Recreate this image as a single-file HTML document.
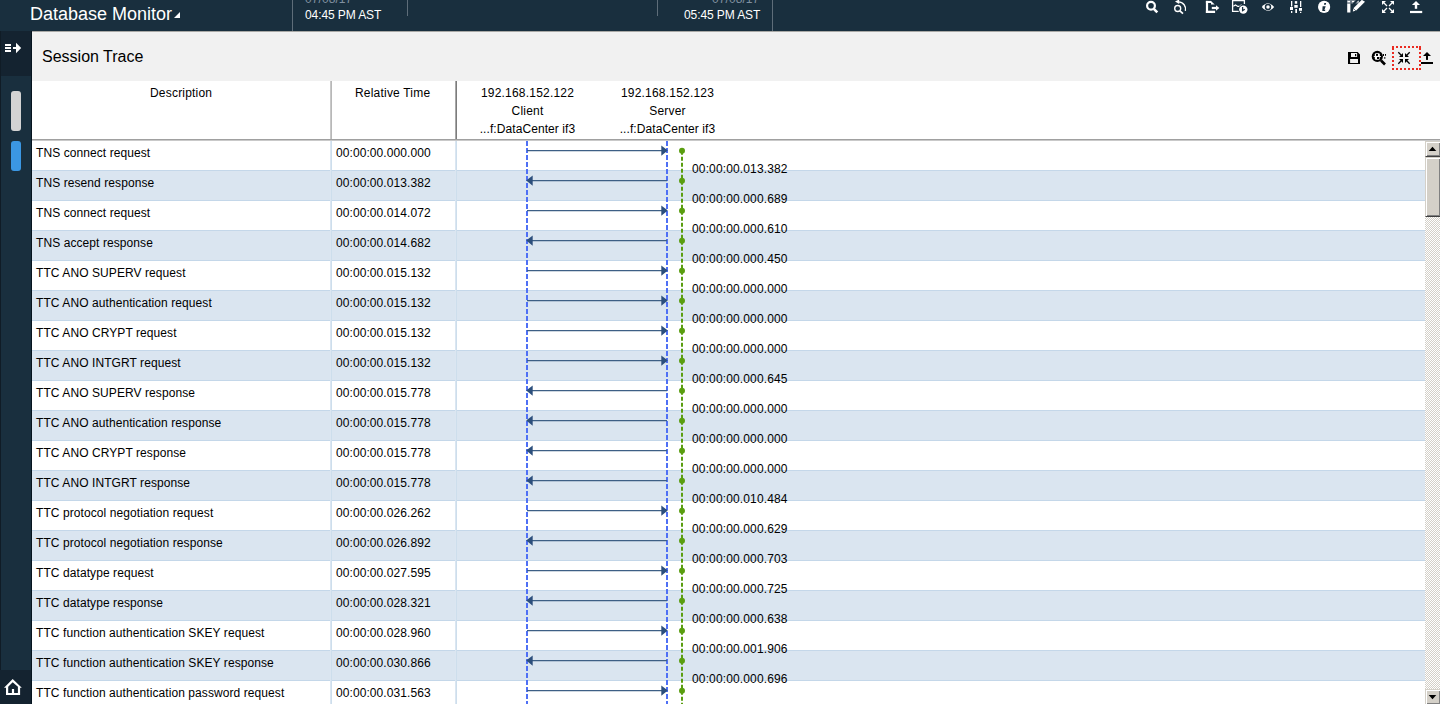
<!DOCTYPE html><html><head><meta charset="utf-8"><style>
*{margin:0;padding:0;box-sizing:border-box}
html,body{width:1440px;height:704px;overflow:hidden;background:#fff;font-family:"Liberation Sans",sans-serif;color:#000}
.a{position:absolute;white-space:nowrap}
#top{position:absolute;left:0;top:0;width:1440px;height:31px;background:#192f3e}
#side{position:absolute;left:0;top:31px;width:32px;height:673px;background:#192f3e}
#panel{position:absolute;left:32px;top:31px;width:1408px;height:673px;background:#fff}
.t12{font-size:12px;line-height:14px;letter-spacing:0.08px}
.hd{letter-spacing:0.2px}
.lb{letter-spacing:0.14px}
.dt{letter-spacing:-0.1px}
.row{position:absolute;left:32px;width:1393px;height:30px}
.blue{height:31px;background:#dae5f0;border-top:1px solid #c4d7e9;border-bottom:1px solid #c4d7e9}
</style></head><body>
<div id="top">
<div class="a" style="left:30px;top:3px;font-size:18px;line-height:22px;color:#fff">Database Monitor</div>
<svg class="a" style="left:173px;top:11px" width="8" height="8"><path d="M1 7 L7 7 L7 1 Z" fill="#fff"/></svg>
<div class="a" style="left:292px;top:0;width:1px;height:31px;background:#5e6d79"></div>
<div class="a" style="left:407px;top:0;width:1px;height:16px;background:#5e6d79"></div>
<div class="a" style="left:657px;top:0;width:1px;height:16px;background:#5e6d79"></div>
<div class="a" style="left:772px;top:0;width:1px;height:31px;background:#5e6d79"></div>
<div class="a t12" style="left:305px;top:-8px;color:#8090a0">07/08/17</div>
<div class="a t12 dt" style="left:305px;top:8px;color:#fff">04:45 PM AST</div>
<div class="a t12" style="left:712px;top:-8px;color:#8090a0">07/08/17</div>
<div class="a t12 dt" style="left:684px;top:8px;color:#fff">05:45 PM AST</div>
</div>
<div id="side">
<div class="a" style="left:0;top:0;width:31px;height:45px;background:#142330"></div>
<div class="a" style="left:31px;top:0;width:1px;height:673px;background:#06141f"></div>
<div class="a" style="left:0;top:0;width:1px;height:673px;background:#101c26"></div>
<div class="a" style="left:11px;top:60px;width:10px;height:40px;border-radius:3px;background:#d3d3d3"></div>
<div class="a" style="left:11px;top:110px;width:10px;height:30px;border-radius:3px;background:#3b97e3"></div>
<div class="a" style="left:0;top:639px;width:31px;height:34px;background:#142330"></div>
</div>
<div id="panel">
<div class="a" style="left:0;top:0;width:1408px;height:50px;background:#f1f1f1"></div>
<div class="a" style="left:0;top:0;width:1408px;height:1px;background:#a9a9a6"></div>
<div class="a" style="left:10px;top:17px;font-size:16px;line-height:18px;color:#000">Session Trace</div>
</div>
<div class="a" style="left:330px;top:81px;width:1px;height:59px;background:#c8c8c8"></div>
<div class="a" style="left:331px;top:81px;width:1px;height:59px;background:#b8b8b8"></div>
<div class="a" style="left:455px;top:81px;width:1px;height:59px;background:#a8a8a8"></div>
<div class="a" style="left:456px;top:81px;width:1px;height:59px;background:#7c7c7c"></div>
<div class="a" style="left:32px;top:139px;width:1408px;height:1px;background:#a0a0a0"></div>
<div class="a" style="left:32px;top:140px;width:1408px;height:1px;background:#c9c9c9"></div>
<div class="a t12 hd" style="left:150px;top:86px">Description</div>
<div class="a t12 hd" style="left:355px;top:86px">Relative Time</div>
<div class="a t12 hd" style="left:467.5px;width:120px;text-align:center;top:86px">192.168.152.122</div>
<div class="a t12 hd" style="left:467.5px;width:120px;text-align:center;top:104px">Client</div>
<div class="a t12 " style="left:467.5px;width:120px;text-align:center;top:122px">...f:DataCenter if3</div>
<div class="a t12 hd" style="left:607.5px;width:120px;text-align:center;top:86px">192.168.152.123</div>
<div class="a t12 hd" style="left:607.5px;width:120px;text-align:center;top:104px">Server</div>
<div class="a t12 " style="left:607.5px;width:120px;text-align:center;top:122px">...f:DataCenter if3</div>
<div class="a row" style="top:140px"></div>
<div class="a t12" style="left:36px;top:146px">TNS connect request</div>
<div class="a t12" style="left:336px;top:146px">00:00:00.000.000</div>
<div class="a row blue" style="top:170px"></div>
<div class="a t12" style="left:36px;top:176px">TNS resend response</div>
<div class="a t12" style="left:336px;top:176px">00:00:00.013.382</div>
<div class="a row" style="top:200px"></div>
<div class="a t12" style="left:36px;top:206px">TNS connect request</div>
<div class="a t12" style="left:336px;top:206px">00:00:00.014.072</div>
<div class="a row blue" style="top:230px"></div>
<div class="a t12" style="left:36px;top:236px">TNS accept response</div>
<div class="a t12" style="left:336px;top:236px">00:00:00.014.682</div>
<div class="a row" style="top:260px"></div>
<div class="a t12" style="left:36px;top:266px">TTC ANO SUPERV request</div>
<div class="a t12" style="left:336px;top:266px">00:00:00.015.132</div>
<div class="a row blue" style="top:290px"></div>
<div class="a t12" style="left:36px;top:296px">TTC ANO authentication request</div>
<div class="a t12" style="left:336px;top:296px">00:00:00.015.132</div>
<div class="a row" style="top:320px"></div>
<div class="a t12" style="left:36px;top:326px">TTC ANO CRYPT request</div>
<div class="a t12" style="left:336px;top:326px">00:00:00.015.132</div>
<div class="a row blue" style="top:350px"></div>
<div class="a t12" style="left:36px;top:356px">TTC ANO INTGRT request</div>
<div class="a t12" style="left:336px;top:356px">00:00:00.015.132</div>
<div class="a row" style="top:380px"></div>
<div class="a t12" style="left:36px;top:386px">TTC ANO SUPERV response</div>
<div class="a t12" style="left:336px;top:386px">00:00:00.015.778</div>
<div class="a row blue" style="top:410px"></div>
<div class="a t12" style="left:36px;top:416px">TTC ANO authentication response</div>
<div class="a t12" style="left:336px;top:416px">00:00:00.015.778</div>
<div class="a row" style="top:440px"></div>
<div class="a t12" style="left:36px;top:446px">TTC ANO CRYPT response</div>
<div class="a t12" style="left:336px;top:446px">00:00:00.015.778</div>
<div class="a row blue" style="top:470px"></div>
<div class="a t12" style="left:36px;top:476px">TTC ANO INTGRT response</div>
<div class="a t12" style="left:336px;top:476px">00:00:00.015.778</div>
<div class="a row" style="top:500px"></div>
<div class="a t12" style="left:36px;top:506px">TTC protocol negotiation request</div>
<div class="a t12" style="left:336px;top:506px">00:00:00.026.262</div>
<div class="a row blue" style="top:530px"></div>
<div class="a t12" style="left:36px;top:536px">TTC protocol negotiation response</div>
<div class="a t12" style="left:336px;top:536px">00:00:00.026.892</div>
<div class="a row" style="top:560px"></div>
<div class="a t12" style="left:36px;top:566px">TTC datatype request</div>
<div class="a t12" style="left:336px;top:566px">00:00:00.027.595</div>
<div class="a row blue" style="top:590px"></div>
<div class="a t12" style="left:36px;top:596px">TTC datatype response</div>
<div class="a t12" style="left:336px;top:596px">00:00:00.028.321</div>
<div class="a row" style="top:620px"></div>
<div class="a t12" style="left:36px;top:626px">TTC function authentication SKEY request</div>
<div class="a t12" style="left:336px;top:626px">00:00:00.028.960</div>
<div class="a row blue" style="top:650px"></div>
<div class="a t12" style="left:36px;top:656px">TTC function authentication SKEY response</div>
<div class="a t12" style="left:336px;top:656px">00:00:00.030.866</div>
<div class="a row" style="top:680px"></div>
<div class="a t12" style="left:36px;top:686px">TTC function authentication password request</div>
<div class="a t12" style="left:336px;top:686px">00:00:00.031.563</div>
<div class="a" style="left:330px;top:141px;width:1px;height:563px;background:#dbe6f1"></div>
<div class="a" style="left:331px;top:141px;width:1px;height:563px;background:#cddeec"></div>
<div class="a" style="left:455px;top:141px;width:1px;height:563px;background:#dbe6f1"></div>
<div class="a" style="left:456px;top:141px;width:1px;height:563px;background:#cddeec"></div>
<svg class="a" style="left:0;top:0" width="1440" height="704">
<line x1="527" y1="141" x2="527" y2="704" stroke="#4f70f5" stroke-width="2" stroke-dasharray="5 2"/>
<line x1="667" y1="141" x2="667" y2="704" stroke="#4f70f5" stroke-width="2" stroke-dasharray="5 2"/>
<line x1="682" y1="150.8" x2="682" y2="704" stroke="#5a9e10" stroke-width="2" stroke-dasharray="4 2"/>
<line x1="527" y1="150.6" x2="662" y2="150.6" stroke="#3d5f85" stroke-width="1.3"/>
<path d="M661.3 145.4 L667.8 150.6 L661.3 155.79999999999998 Z" fill="#2c4f7c"/>
<circle cx="682" cy="150.8" r="3" fill="#5a9e10"/>
<line x1="532" y1="180.6" x2="667" y2="180.6" stroke="#3d5f85" stroke-width="1.3"/>
<path d="M532.7 175.4 L526.2 180.6 L532.7 185.79999999999998 Z" fill="#2c4f7c"/>
<circle cx="682" cy="180.8" r="3" fill="#5a9e10"/>
<line x1="527" y1="210.6" x2="662" y2="210.6" stroke="#3d5f85" stroke-width="1.3"/>
<path d="M661.3 205.4 L667.8 210.6 L661.3 215.79999999999998 Z" fill="#2c4f7c"/>
<circle cx="682" cy="210.8" r="3" fill="#5a9e10"/>
<line x1="532" y1="240.6" x2="667" y2="240.6" stroke="#3d5f85" stroke-width="1.3"/>
<path d="M532.7 235.4 L526.2 240.6 L532.7 245.79999999999998 Z" fill="#2c4f7c"/>
<circle cx="682" cy="240.8" r="3" fill="#5a9e10"/>
<line x1="527" y1="270.6" x2="662" y2="270.6" stroke="#3d5f85" stroke-width="1.3"/>
<path d="M661.3 265.40000000000003 L667.8 270.6 L661.3 275.8 Z" fill="#2c4f7c"/>
<circle cx="682" cy="270.8" r="3" fill="#5a9e10"/>
<line x1="527" y1="300.6" x2="662" y2="300.6" stroke="#3d5f85" stroke-width="1.3"/>
<path d="M661.3 295.40000000000003 L667.8 300.6 L661.3 305.8 Z" fill="#2c4f7c"/>
<circle cx="682" cy="300.8" r="3" fill="#5a9e10"/>
<line x1="527" y1="330.6" x2="662" y2="330.6" stroke="#3d5f85" stroke-width="1.3"/>
<path d="M661.3 325.40000000000003 L667.8 330.6 L661.3 335.8 Z" fill="#2c4f7c"/>
<circle cx="682" cy="330.8" r="3" fill="#5a9e10"/>
<line x1="527" y1="360.6" x2="662" y2="360.6" stroke="#3d5f85" stroke-width="1.3"/>
<path d="M661.3 355.40000000000003 L667.8 360.6 L661.3 365.8 Z" fill="#2c4f7c"/>
<circle cx="682" cy="360.8" r="3" fill="#5a9e10"/>
<line x1="532" y1="390.6" x2="667" y2="390.6" stroke="#3d5f85" stroke-width="1.3"/>
<path d="M532.7 385.40000000000003 L526.2 390.6 L532.7 395.8 Z" fill="#2c4f7c"/>
<circle cx="682" cy="390.8" r="3" fill="#5a9e10"/>
<line x1="532" y1="420.6" x2="667" y2="420.6" stroke="#3d5f85" stroke-width="1.3"/>
<path d="M532.7 415.40000000000003 L526.2 420.6 L532.7 425.8 Z" fill="#2c4f7c"/>
<circle cx="682" cy="420.8" r="3" fill="#5a9e10"/>
<line x1="532" y1="450.6" x2="667" y2="450.6" stroke="#3d5f85" stroke-width="1.3"/>
<path d="M532.7 445.40000000000003 L526.2 450.6 L532.7 455.8 Z" fill="#2c4f7c"/>
<circle cx="682" cy="450.8" r="3" fill="#5a9e10"/>
<line x1="532" y1="480.6" x2="667" y2="480.6" stroke="#3d5f85" stroke-width="1.3"/>
<path d="M532.7 475.40000000000003 L526.2 480.6 L532.7 485.8 Z" fill="#2c4f7c"/>
<circle cx="682" cy="480.8" r="3" fill="#5a9e10"/>
<line x1="527" y1="510.6" x2="662" y2="510.6" stroke="#3d5f85" stroke-width="1.3"/>
<path d="M661.3 505.40000000000003 L667.8 510.6 L661.3 515.8000000000001 Z" fill="#2c4f7c"/>
<circle cx="682" cy="510.8" r="3" fill="#5a9e10"/>
<line x1="532" y1="540.6" x2="667" y2="540.6" stroke="#3d5f85" stroke-width="1.3"/>
<path d="M532.7 535.4 L526.2 540.6 L532.7 545.8000000000001 Z" fill="#2c4f7c"/>
<circle cx="682" cy="540.8" r="3" fill="#5a9e10"/>
<line x1="527" y1="570.6" x2="662" y2="570.6" stroke="#3d5f85" stroke-width="1.3"/>
<path d="M661.3 565.4 L667.8 570.6 L661.3 575.8000000000001 Z" fill="#2c4f7c"/>
<circle cx="682" cy="570.8" r="3" fill="#5a9e10"/>
<line x1="532" y1="600.6" x2="667" y2="600.6" stroke="#3d5f85" stroke-width="1.3"/>
<path d="M532.7 595.4 L526.2 600.6 L532.7 605.8000000000001 Z" fill="#2c4f7c"/>
<circle cx="682" cy="600.8" r="3" fill="#5a9e10"/>
<line x1="527" y1="630.6" x2="662" y2="630.6" stroke="#3d5f85" stroke-width="1.3"/>
<path d="M661.3 625.4 L667.8 630.6 L661.3 635.8000000000001 Z" fill="#2c4f7c"/>
<circle cx="682" cy="630.8" r="3" fill="#5a9e10"/>
<line x1="532" y1="660.6" x2="667" y2="660.6" stroke="#3d5f85" stroke-width="1.3"/>
<path d="M532.7 655.4 L526.2 660.6 L532.7 665.8000000000001 Z" fill="#2c4f7c"/>
<circle cx="682" cy="660.8" r="3" fill="#5a9e10"/>
<line x1="527" y1="690.6" x2="662" y2="690.6" stroke="#3d5f85" stroke-width="1.3"/>
<path d="M661.3 685.4 L667.8 690.6 L661.3 695.8000000000001 Z" fill="#2c4f7c"/>
<circle cx="682" cy="690.8" r="3" fill="#5a9e10"/>
</svg>
<div class="a t12 lb" style="left:692px;top:162px">00:00:00.013.382</div>
<div class="a t12 lb" style="left:692px;top:192px">00:00:00.000.689</div>
<div class="a t12 lb" style="left:692px;top:222px">00:00:00.000.610</div>
<div class="a t12 lb" style="left:692px;top:252px">00:00:00.000.450</div>
<div class="a t12 lb" style="left:692px;top:282px">00:00:00.000.000</div>
<div class="a t12 lb" style="left:692px;top:312px">00:00:00.000.000</div>
<div class="a t12 lb" style="left:692px;top:342px">00:00:00.000.000</div>
<div class="a t12 lb" style="left:692px;top:372px">00:00:00.000.645</div>
<div class="a t12 lb" style="left:692px;top:402px">00:00:00.000.000</div>
<div class="a t12 lb" style="left:692px;top:432px">00:00:00.000.000</div>
<div class="a t12 lb" style="left:692px;top:462px">00:00:00.000.000</div>
<div class="a t12 lb" style="left:692px;top:492px">00:00:00.010.484</div>
<div class="a t12 lb" style="left:692px;top:522px">00:00:00.000.629</div>
<div class="a t12 lb" style="left:692px;top:552px">00:00:00.000.703</div>
<div class="a t12 lb" style="left:692px;top:582px">00:00:00.000.725</div>
<div class="a t12 lb" style="left:692px;top:612px">00:00:00.000.638</div>
<div class="a t12 lb" style="left:692px;top:642px">00:00:00.001.906</div>
<div class="a t12 lb" style="left:692px;top:672px">00:00:00.000.696</div>
<div class="a" style="left:1425px;top:141px;width:16px;height:563px;background:repeating-conic-gradient(#d4d0c8 0 25%,#fff 0 50%) 0 0/2px 2px"></div>
<div class="a" style="left:1425px;top:141px;width:16px;height:16px;background:#d4d0c8;border-top:1px solid #d4d0c8;border-left:1px solid #d4d0c8;border-bottom:1px solid #404040;border-right:1px solid #404040;box-shadow:inset 1px 1px #fff,inset -1px -1px #808080"></div>
<div class="a" style="left:1425px;top:157px;width:16px;height:60px;background:#d4d0c8;border-top:1px solid #d4d0c8;border-left:1px solid #d4d0c8;border-bottom:1px solid #404040;border-right:1px solid #404040;box-shadow:inset 1px 1px #fff,inset -1px -1px #808080"></div>
<div class="a" style="left:1425px;top:689px;width:16px;height:16px;background:#d4d0c8;border-top:1px solid #d4d0c8;border-left:1px solid #d4d0c8;border-bottom:1px solid #404040;border-right:1px solid #404040;box-shadow:inset 1px 1px #fff,inset -1px -1px #808080"></div>
<svg class="a" style="left:1428px;top:146px" width="10" height="6"><path d="M0.7 5 L4.5 0.7 L8.3 5 Z" fill="#000"/></svg>
<svg class="a" style="left:1428px;top:694px" width="10" height="6"><path d="M0.7 1 L4.5 5.3 L8.3 1 Z" fill="#000"/></svg>
<svg class="a" style="left:0;top:0" width="1440" height="31">
<g fill="none" stroke="#fff">
<circle cx="1151" cy="5.8" r="3.9" stroke-width="2.2"/>
<line x1="1153.8" y1="8.8" x2="1157.3" y2="12.3" stroke-width="2.6"/>
<circle cx="1177.7" cy="8.5" r="3" stroke-width="1.35"/>
<line x1="1179.9" y1="10.8" x2="1183" y2="13.6" stroke-width="1.7"/>
<path d="M1178.5 1.9 A7.2 7.2 0 0 1 1185.4 10.9" stroke-width="1.35"/>
<path d="M1239.5 11.3 H1232.6 V0.5 H1244.4 V3.9" stroke-width="1.3"/>
<path d="M1233.3 6.3 L1235.5 5 L1237.8 6.4 L1239.8 6.4 L1241.5 4.5" stroke-width="1.1"/>
</g><g fill="#fff">
<path d="M1216 5.3 L1219.3 8 L1216 10.8 Z"/>
<rect x="1205.9" y="0.9" width="2.2" height="12.1"/><rect x="1205.9" y="0.9" width="5.3" height="2.1"/><path d="M1211 0.9 L1214.7 4.6 H1211 Z"/><rect x="1205.9" y="10.7" width="9.2" height="2.3"/><rect x="1211.8" y="6.9" width="4.5" height="2.2"/>
<path d="M1175 1.6 L1179.2 -0.6 L1179.2 3.9 Z"/>
<circle cx="1243.3" cy="9.6" r="5" fill="#192f3e"/><circle cx="1243.3" cy="9.6" r="4.2"/>
<path d="M1261.8 7 Q1268 -0.5 1274.2 7 Q1268 14.5 1261.8 7 Z"/>
<circle cx="1268" cy="7" r="2.5" fill="none" stroke="#192f3e" stroke-width="1.5"/>
<rect x="1291" y="1" width="1.3" height="5.5"/><rect x="1290" y="7" width="3" height="3"/><rect x="1291" y="11" width="1.3" height="2"/>
<rect x="1294.8" y="1.1" width="2.4" height="2.6"/><rect x="1294.3" y="5" width="3.4" height="2.8"/><rect x="1295.3" y="9" width="1.7" height="4"/>
<rect x="1300" y="1" width="1.3" height="6"/><rect x="1299" y="8" width="3" height="2.8"/><rect x="1300" y="11.8" width="1.3" height="1.2"/>
<circle cx="1324.1" cy="6.9" r="6.1"/>
<rect x="1347" y="0" width="12" height="3.6" fill="#6f7d89"/>
<rect x="1347.2" y="3.6" width="3.2" height="8.9"/>
<rect x="1347.5" y="0.9" width="2.5" height="1.4"/><rect x="1352" y="0.9" width="2.5" height="1.4"/><rect x="1356" y="0.9" width="2.5" height="1.4"/>
<rect x="1352" y="3.6" width="1.5" height="1.4"/>
<path d="M1351 5 L1356 0 L1359 0 L1353 6 Z" fill="#192f3e"/>
<path d="M1352.8 11.4 L1353.6 8 L1361.8 -0.2 L1365 1.8 L1356.2 10.4 Z"/>
<path d="M1353.4 8.4 L1356 11" stroke="#192f3e" stroke-width="0.6" fill="none"/>
<path d="M1382 1 H1386 L1382 5 Z M1394 1 V5 L1390 1 Z M1382 13 V9 L1386 13 Z M1394 13 H1390 L1394 9 Z"/>
<path d="M1416 0.9 L1420 5 H1411.9 Z"/><rect x="1414.8" y="4.8" width="2.4" height="4"/><rect x="1410" y="10.9" width="12.2" height="2.2"/>
</g><g fill="none" stroke="#fff" stroke-width="1.25">
<path d="M1383.5 2.5 L1387 6 M1392.5 2.5 L1389 6 M1383.5 11.5 L1387 8 M1392.5 11.5 L1389 8"/>
</g>
<path d="M1242.6 7 V10.5 L1244.8 9.2" fill="none" stroke="#192f3e" stroke-width="1.3"/>
<path d="M1324.3 3 H1326.1 L1325.8 4.8 H1324 Z M1322.6 6.2 H1325.7 L1324.4 10 L1325.4 9.7 L1325 10.9 H1322.3 Z" fill="#192f3e"/>
</svg>
<svg class="a" style="left:0;top:0" width="32" height="704"><g fill="#fff">
<rect x="5" y="44" width="6" height="2"/><rect x="5" y="47" width="6" height="2"/><rect x="5" y="50" width="6" height="2"/>
<rect x="13" y="47" width="4" height="2"/><path d="M16 42.8 L21.2 48 L16 53.2 Z"/>
<path fill-rule="evenodd" d="M12.7 679 L21.8 687.7 H20.1 V695 H6 V687.7 H4 Z M12.7 682.3 L8.2 686.8 V693 H11.9 V689 H14.1 V693 H17.9 V686.8 Z"/>
</g></svg>
<svg class="a" style="left:0;top:0" width="1440" height="80"><g fill="#000">
<path fill-rule="evenodd" d="M1348 52 H1357.7 L1360 54.4 V64 H1348 Z M1351 53 V57.1 H1357.1 V53 Z M1350.1 59 V62.9 H1358 V59 Z"/>
<rect x="1355" y="54" width="1.2" height="2.2"/>
<path d="M1398.3 52.3 L1402 56 M1409.7 52.3 L1406 56 M1398.3 63.7 L1402 60 M1409.7 63.7 L1406 60" stroke="#000" stroke-width="1.3"/>
<path d="M1403 53 V57 H1399 Z M1405 53 V57 H1409 Z M1403 63 V59 H1399 Z M1405 63 V59 H1409 Z"/>
<path d="M1427 52 L1431 56 H1423 Z"/><rect x="1426" y="55.5" width="2" height="4.4"/><rect x="1421" y="62" width="12" height="2"/>
<line x1="1381" y1="60.5" x2="1385" y2="64.5" stroke="#000" stroke-width="2.6"/>
<circle cx="1377.3" cy="56.4" r="5.6"/>
<rect x="1374.8" y="53.3" width="5" height="6.5" rx="1.2" fill="#fff"/><rect x="1373.8" y="56" width="7.2" height="0.9" fill="#fff"/>
<rect x="1376" y="54" width="2" height="1.9"/><rect x="1377" y="57" width="2.2" height="2"/>
<rect x="1383" y="54" width="1" height="2"/>
<rect x="1385" y="54" width="1" height="1.8"/><rect x="1384.3" y="57" width="1" height="1.8"/>
</g><g fill="#ea2a20">
<rect x="1392" y="46" width="2" height="4"/><rect x="1419" y="46" width="2" height="4"/><rect x="1396" y="46" width="2" height="2"/><rect x="1396" y="68" width="2" height="2"/><rect x="1400" y="46" width="2" height="2"/><rect x="1400" y="68" width="2" height="2"/><rect x="1404" y="46" width="2" height="2"/><rect x="1404" y="68" width="2" height="2"/><rect x="1408" y="46" width="2" height="2"/><rect x="1408" y="68" width="2" height="2"/><rect x="1412" y="46" width="2" height="2"/><rect x="1412" y="68" width="2" height="2"/><rect x="1416" y="46" width="2" height="2"/><rect x="1416" y="68" width="2" height="2"/><rect x="1392" y="52" width="2" height="2"/><rect x="1419" y="52" width="2" height="2"/><rect x="1392" y="56" width="2" height="2"/><rect x="1419" y="56" width="2" height="2"/><rect x="1392" y="60" width="2" height="2"/><rect x="1419" y="60" width="2" height="2"/><rect x="1392" y="64" width="2" height="2"/><rect x="1419" y="64" width="2" height="2"/><rect x="1392" y="68" width="2" height="2"/><rect x="1419" y="68" width="2" height="2"/>
</g>
</svg>
</body></html>
